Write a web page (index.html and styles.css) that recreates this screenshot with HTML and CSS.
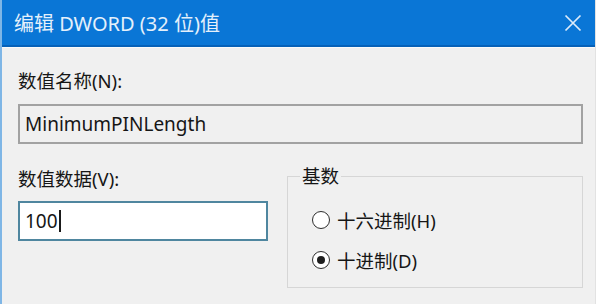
FILE: index.html
```html
<!DOCTYPE html>
<html lang="zh-CN">
<head>
<meta charset="utf-8">
<title>编辑 DWORD (32 位)值</title>
<link rel="stylesheet" href="styles.css">
</head>
<body>
<div class="window">
  <div class="titlebar">
    <span class="title">编辑 DWORD (32 位)值</span>
    <svg class="close" width="18" height="18" viewBox="0 0 18 18" aria-hidden="true">
      <path d="M1.5 1.5 L16.5 16.5 M16.5 1.5 L1.5 16.5" stroke="#dcebfa" stroke-width="1.7" fill="none"/>
    </svg>
  </div>
  <div class="content">
    <div class="label first">数值名称(N):</div>
    <div class="field readonly">MinimumPINLength</div>
    <div class="row">
      <div class="col">
        <div class="label second">数值数据(V):</div>
        <div class="field active"><span class="value">100</span><span class="caret"></span></div>
      </div>
      <fieldset class="group">
        <legend>基数</legend>
        <div class="radio"><span class="dot"></span><span>十六进制(H)</span></div>
        <div class="radio"><span class="dot checked"></span><span>十进制(D)</span></div>
      </fieldset>
    </div>
  </div>
</div>
</body>
</html>
```
FILE: styles.css
```css
html, body {
  margin: 0;
  padding: 0;
  background: #f0f0f0;
}
body {
  width: 596px;
  height: 304px;
  overflow: hidden;
  font-family: "Noto Sans", "Noto Sans CJK SC", sans-serif;
  color: #161616;
}
.window {
  height: 304px;
  box-sizing: border-box;
  border-left: 2px solid #7fb6e6;
  border-right: 1px solid #e2e2e2;
  display: flex;
  flex-direction: column;
}
.titlebar {
  height: 45px;
  background: #0a76d6;
  border-bottom: 2px solid #0661b8;
  display: flex;
  align-items: center;
  justify-content: space-between;
  padding: 0 13px 0 12px;
  flex-shrink: 0;
}
.title {
  color: #e4f0fb;
  font-size: 20px;
}
.close {
  display: block;
}
.content {
  padding: 21px 12px 0 16px;
  border-top: 1px solid #fafafa;
}
.label {
  font-size: 18.5px;
  line-height: 24px;
}
.field {
  box-sizing: border-box;
  height: 40px;
  border: 2px solid #a2a2a2;
  font-size: 19px;
  display: flex;
  align-items: center;
  padding-left: 5px;
}
.first + .field {
  margin-top: 11px;
}
.readonly {
  background: #f0f0f0;
}
.row {
  display: flex;
  gap: 19px;
}
.col {
  width: 250px;
  flex-shrink: 0;
}
.second {
  margin-top: 23px;
  margin-bottom: 10px;
}
.active {
  background: #fff;
  border-color: #4f869f;
}
.caret {
  display: inline-block;
  width: 2px;
  height: 22px;
  background: #1a1a1a;
  margin-left: 1px;
}
.group {
  flex: 1;
  margin: 20px 0 0 0;
  padding: 0 0 0 24px;
  height: 124px;
  box-sizing: border-box;
  border: 1px solid #d6d6d6;
  min-width: 0;
}
.group legend {
  font-size: 18.5px;
  line-height: 24px;
  padding: 0 2px;
  margin-left: -12px;
}
.radio {
  display: flex;
  align-items: center;
  gap: 7px;
  height: 40px;
  font-size: 18.5px;
}
.radio:first-of-type {
  margin-top: 12px;
}
.dot {
  flex: 0 0 18px;
  width: 18px;
  height: 18px;
  box-sizing: border-box;
  border: 1.6px solid #2e2e2e;
  border-radius: 50%;
  background: #fff;
  display: flex;
  align-items: center;
  justify-content: center;
}
.dot.checked::after {
  content: "";
  width: 8px;
  height: 8px;
  border-radius: 50%;
  background: #1e1e1e;
}
```
